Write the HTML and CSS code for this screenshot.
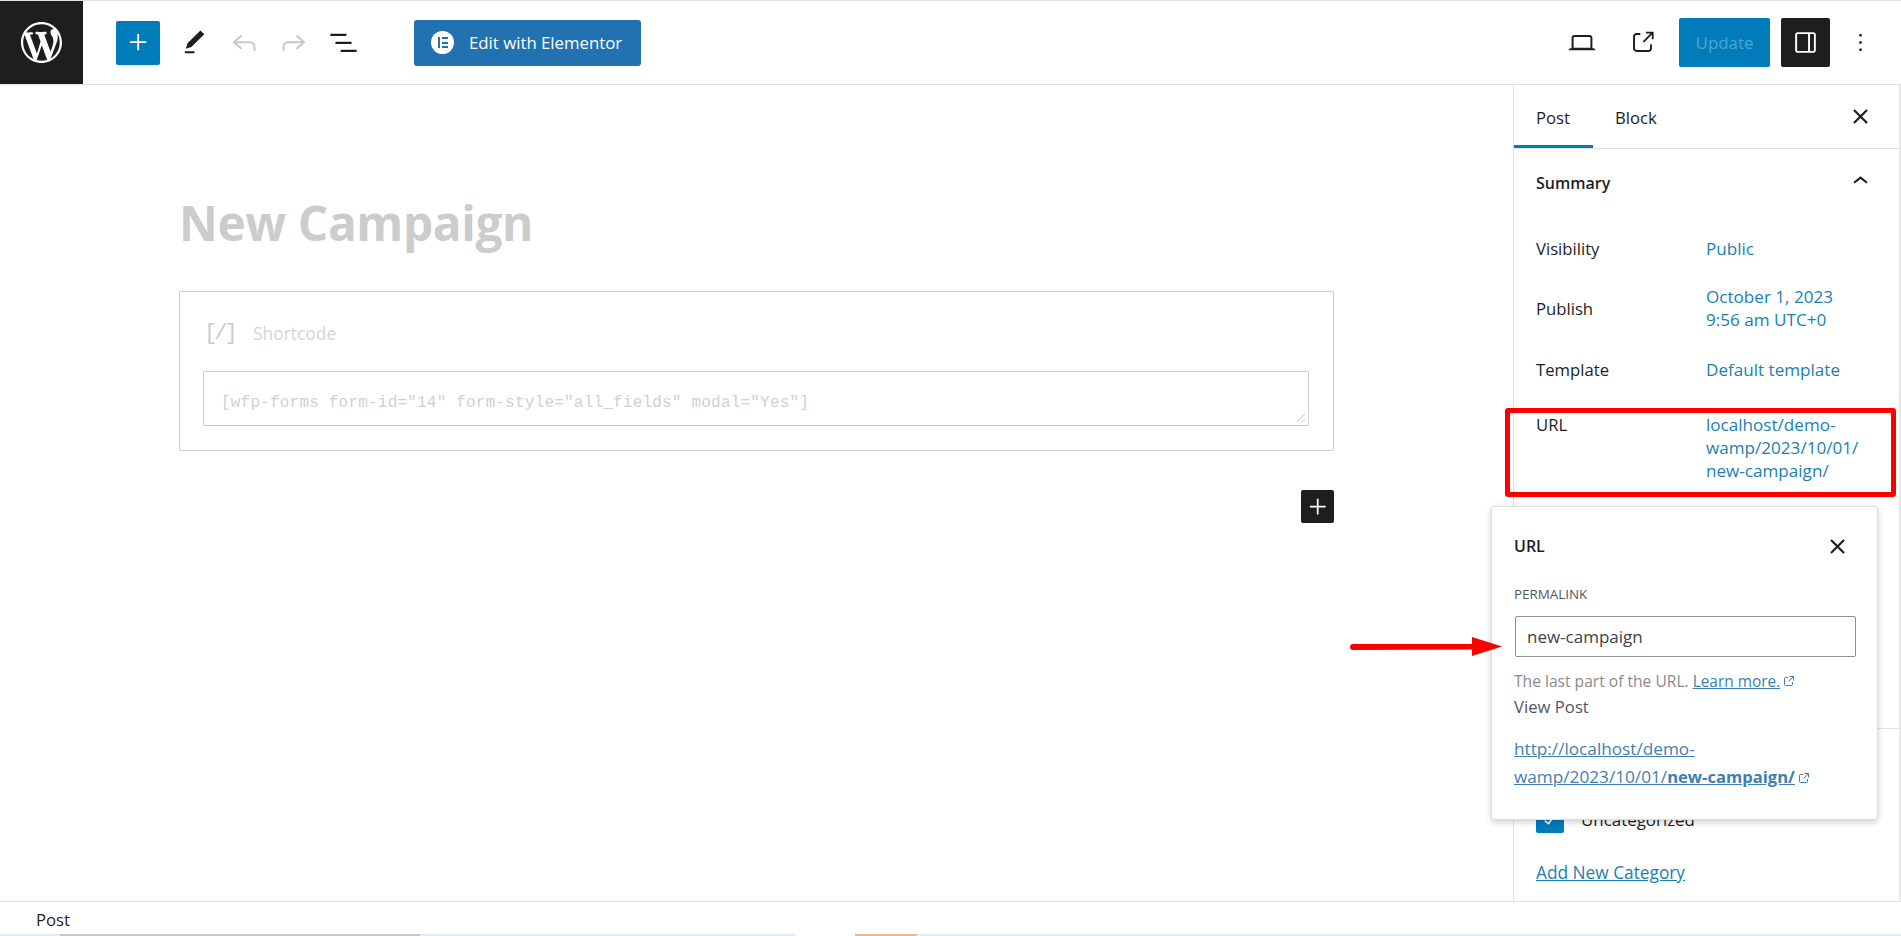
FILE: index.html
```html
<!DOCTYPE html>
<html lang="en">
<head>
<meta charset="utf-8">
<title>New Campaign</title>
<link rel="stylesheet" href="styles.css">
</head>
<body>
<div class="app">
  <header class="topbar">
    <a class="wp-logo" href="#">
      <svg viewBox="0 0 20 20" width="41" height="41"><path fill="#fff" d="M20 10c0-5.510-4.490-10-10-10C4.480 0 0 4.490 0 10c0 5.520 4.480 10 10 10 5.510 0 10-4.480 10-10zM7.780 15.370L4.370 6.220c.55-.02 1.170-.08 1.170-.08.500-.06.440-1.130-.06-1.110 0 0-1.450.11-2.370.11-.18 0-.37 0-.58-.01C4.120 2.690 6.890 1.060 10 1.060c2.300 0 4.410.87 6 2.340-.68-.11-1.650.39-1.650 1.580 0 .74.450 1.360.9 2.100.35.610.55 1.360.55 2.460 0 1.490-1.400 5-1.400 5l-3.030-8.370c.54-.02.82-.17.82-.17.500-.05.440-1.250-.06-1.220 0 0-1.440.12-2.380.12-.87 0-2.330-.12-2.330-.12-.500-.03-.56 1.200-.06 1.220l.92.080 1.260 3.410zM17.410 10c.24-.64.74-1.870.43-4.250.7 1.290 1.050 2.710 1.050 4.250 0 3.290-1.730 6.240-4.400 7.780.97-2.590 1.940-5.200 2.920-7.780zM6.100 18.090C3.120 16.650 1.060 13.570 1.060 10c0-1.310.23-2.500.73-3.620 1.420 3.900 2.840 7.810 4.310 11.710zm4.030-6.800l2.570 6.980c.01.05.04.090.07.120-.87.31-1.800.48-2.770.48-.8 0-1.590-.12-2.340-.34.84-2.420 1.670-4.830 2.470-7.240z"/></svg>
    </a>
    <div class="tools">
      <button class="tool-add" aria-label="Add block"><svg viewBox="0 0 24 24" width="29" height="29"><path fill="#fff" d="M11 12.500H5v-1.500h6V5h1.500v6h6v1.500h-6v6H11z"/></svg></button>
      <button class="tool pencil" aria-label="Tools"><svg viewBox="0 0 24 24" width="29" height="29"><path fill="#1e1e1e" d="M20.100 5.100 16.900 2 6.200 12.700l-1.300 4.400 4.500-1.300L20.100 5.100zM4 20.800h8v-1.500H4v1.500z"/></svg></button>
      <button class="tool undo" aria-label="Undo"><svg viewBox="0 0 24 18" width="24" height="18"><path fill="none" stroke="#c8c8c8" stroke-width="2" d="M9.500 1.500 2 8.200l7.500 6.500M2 8.200h16c2.500 0 4.500 2 4.500 4.500V17"/></svg></button>
      <button class="tool redo" aria-label="Redo"><svg viewBox="0 0 24 18" width="24" height="18"><path fill="none" stroke="#c8c8c8" stroke-width="2" d="M14.500 1.500 22 8.200l-7.500 6.500M22 8.200H6c-2.500 0-4.500 2-4.500 4.500V17"/></svg></button>
      <button class="tool list" aria-label="List view"><svg viewBox="0 0 24 24" width="35" height="35"><path fill="#1e1e1e" d="M3 6h11v1.500H3V6zm3.500 5.500h11V13h-11v-1.500zM10 17h11v1.500H10V17z"/></svg></button>
      <button class="elementor"><span class="el-mark"><i></i><i></i><i></i><i></i></span>Edit with Elementor</button>
    </div>
    <div class="actions">
      <button class="tool laptop" aria-label="Preview"><svg viewBox="0 0 24 24" width="32" height="32"><path fill="#1e1e1e" d="M20.500 16h-.7V8c0-1.100-.9-2-2-2H6.200c-1.100 0-2 .9-2 2v8h-.7c-.8 0-1.500.7-1.500 1.500h20c0-.8-.7-1.500-1.500-1.500zM5.700 8c0-.3.200-.5.500-.5h11.600c.3 0 .5.200.5.500v7.600H5.700V8z"/></svg></button>
      <button class="tool external" aria-label="View post"><svg viewBox="0 0 24 24" width="29" height="29"><path fill="#1e1e1e" d="M18.200 17c0 .7-.6 1.200-1.200 1.200H7c-.7 0-1.200-.6-1.200-1.200V7c0-.7.600-1.200 1.200-1.200h3.200V4.200H7C5.500 4.200 4.200 5.500 4.200 7v10c0 1.500 1.200 2.800 2.800 2.800h10c1.500 0 2.800-1.200 2.800-2.800v-3.600h-1.500V17zM14.900 3v1.500h3.700l-6.400 6.400 1.100 1.100 6.400-6.400v3.700h1.500V3h-6.300z"/></svg></button>
      <button class="update">Update</button>
      <button class="toggle" aria-label="Settings"><svg viewBox="0 0 24 24" width="31" height="31"><path fill="#fff" d="M18 4H6c-1.100 0-2 .9-2 2v12c0 1.100.9 2 2 2h12c1.100 0 2-.9 2-2V6c0-1.100-.9-2-2-2zM5.500 18V6c0-.3.200-.5.500-.5h8v13H6c-.3 0-.5-.2-.5-.5zm13 0c0 .3-.2.500-.5.500h-2.500v-13H18c.3 0 .5.200.5.500v12z"/></svg></button>
      <button class="tool kebab" aria-label="Options"><svg viewBox="0 0 24 24" width="29" height="29"><path fill="#1e1e1e" d="M13 19h-2v-2h2v2zm0-6h-2v-2h2v2zm0-6h-2V5h2v2z"/></svg></button>
    </div>
  </header>

  <main class="workspace">
    <section class="editor">
      <h1 class="post-title">New Campaign</h1>
      <div class="block">
        <div class="block-label"><span class="sc-icon">[/]</span><span>Shortcode</span></div>
        <div class="code-box">[wfp-forms form-id="14" form-style="all_fields" modal="Yes"]
          <svg class="grip" viewBox="0 0 10 10" width="10" height="10"><path stroke="#c8c8c8" fill="none" d="M1 9 9 1M6 9l3-3"/></svg>
        </div>
      </div>
      <div class="inserter-row"><button class="inserter" aria-label="Add block"><svg viewBox="0 0 24 24" width="28" height="28"><path fill="#fff" d="M11 12.500H5v-1.500h6V5h1.500v6h6v1.500h-6v6H11z"/></svg></button></div>
    </section>

    <aside class="sidebar">
      <div class="tabs">
        <span class="tab active">Post</span>
        <span class="tab">Block</span>
        <svg class="tabs-close" viewBox="0 0 24 24" width="29" height="29"><path fill="none" stroke="#1e1e1e" stroke-width="1.800" d="M6.600 6.600 17.400 17.400M17.400 6.600 6.600 17.400"/></svg>
      </div>
      <div class="panel summary">
        <div class="panel-head">
          <span>Summary</span>
          <svg viewBox="0 0 24 24" width="31" height="31"><path fill="#1e1e1e" d="M6.500 12.400 12 8l5.500 4.400-.9 1.200L12 10l-4.500 3.600z"/></svg>
        </div>
        <div class="row r-visibility"><span>Visibility</span><a href="#">Public</a></div>
        <div class="row r-publish"><span>Publish</span><a href="#">October 1, 2023<br>9:56 am UTC+0</a></div>
        <div class="row r-template"><span>Template</span><a href="#">Default template</a></div>
        <div class="row r-url"><span>URL</span><a href="#">localhost/demo-<br>wamp/2023/10/01/<br>new-campaign/</a></div>
      </div>
      <div class="panel categories">
        <label class="check"><span class="box"><svg viewBox="0 0 24 24" width="24" height="24"><path fill="#fff" d="M16.700 7.100l-6.300 8.500-3.300-2.500-.9 1.200 4.500 3.400L17.900 7.900z"/></svg></span>Uncategorized</label>
        <a class="add-cat" href="#">Add New Category</a>
      </div>
    </aside>

    <div class="red-box"></div>

    <div class="popover">
      <div class="pop-head">
        <span>URL</span>
        <svg viewBox="0 0 24 24" width="29" height="29"><path fill="none" stroke="#1e1e1e" stroke-width="1.800" d="M6.600 6.600 17.400 17.400M17.400 6.600 6.600 17.400"/></svg>
      </div>
      <div class="pop-label">PERMALINK</div>
      <div class="pop-input">new-campaign</div>
      <p class="pop-help">The last part of the URL. <a href="#">Learn more.</a><svg class="ext" viewBox="0 0 12 12" width="12" height="12"><path fill="none" stroke="#3f7fb0" d="M5 2.500H2.500a1 1 0 0 0-1 1v6a1 1 0 0 0 1 1h6a1 1 0 0 0 1-1V7M6.500 1.500h4v4M10.500 1.500 5.500 6.500"/></svg></p>
      <div class="pop-view">View Post</div>
      <p class="pop-link"><a href="#">http://localhost/demo-<br>wamp/2023/10/01/<b>new-campaign/</b></a><svg class="ext" viewBox="0 0 12 12" width="12" height="12"><path fill="none" stroke="#3f7fb0" d="M5 2.500H2.500a1 1 0 0 0-1 1v6a1 1 0 0 0 1 1h6a1 1 0 0 0 1-1V7M6.500 1.500h4v4M10.500 1.500 5.500 6.500"/></svg></p>
    </div>

    <svg class="red-arrow" viewBox="0 0 153 20" width="153" height="20"><path fill="#f00" d="M3 7 122 7V0l30 9.500L122 19v-6.500L3 13a3 3 0 0 1 0-6z"/></svg>
  </main>

  <footer class="statusbar">Post</footer>
  <div class="strip"><i class="s1"></i><i class="s2"></i><i class="s3"></i><i class="s4"></i><i class="s5"></i><i class="s6"></i></div>
</div>
</body>
</html>
```

FILE: styles.css
```css
* { box-sizing: border-box; }
html, body { margin: 0; padding: 0; height: 100%; background: #fff; }
body { font-family: "Open Sans", "Noto Sans", sans-serif; font-size: 16.7px; color: #1e1e1e; overflow: hidden; }
button { border: 0; background: none; padding: 0; font: inherit; display: flex; align-items: center; justify-content: center; }
button svg { flex: none; }
a { color: #1b7fb0; text-decoration: none; }
svg { display: block; }
p { margin: 0; }

.app { display: flex; flex-direction: column; height: 936px; }

.topbar { flex: 0 0 85px; display: flex; align-items: center; border-top: 1px solid #e0e0e0; border-bottom: 1px solid #e0e0e0; }
.wp-logo { flex: 0 0 83px; height: 83px; background: #1e1e1e; display: flex; align-items: center; justify-content: center; }
.tools { display: flex; align-items: center; margin-left: 33px; }
.tool-add { width: 44px; height: 44px; background: #007cba; border-radius: 2px; }
.tool { width: 29px; height: 44px; }
.pencil { margin-left: 20px; }
.undo { margin-left: 20px; }
.redo { margin-left: 21px; }
.list { margin-left: 21px; }
.elementor { margin-left: 56px; width: 227px; height: 46px; background: #2271b1; color: #fff; border-radius: 3px; justify-content: flex-start; padding-left: 17px; font-size: 16.8px; }
.el-mark { width: 23px; height: 23px; border-radius: 50%; background: #fff; margin-right: 15px; position: relative; flex: none; }
.el-mark i { position: absolute; background: #2271b1; display: block; }
.el-mark i:nth-child(1) { left: 7px; top: 6px; width: 2px; height: 11px; }
.el-mark i:nth-child(2) { left: 11px; top: 6px; width: 6px; height: 2px; }
.el-mark i:nth-child(3) { left: 11px; top: 10.500px; width: 6px; height: 2px; }
.el-mark i:nth-child(4) { left: 11px; top: 15px; width: 6px; height: 2px; }
.actions { margin-left: auto; display: flex; align-items: center; padding-right: 26px; }
.external { margin-left: 32px; }
.update { margin-left: 22px; width: 91px; height: 49px; background: #007cba; color: #4ba6d6; border-radius: 2px; font-size: 16.9px; }
.toggle { margin-left: 11px; width: 49px; height: 49px; background: #1e1e1e; border-radius: 2px; }
.kebab { margin-left: 16px; }

.workspace { flex: 1; display: flex; position: relative; min-height: 0; }
.editor { flex: 1; padding: 0 179px; min-width: 0; }
.post-title { margin: 100px 0 0; font-size: 47.8px; line-height: 76px; font-weight: 700; color: #ccc; letter-spacing: -.4px; }
.block { margin-top: 30px; height: 160px; border: 1px solid #ccc; border-radius: 2px; padding: 23px 20px 0 24px; width: 1155px; }
.block-label { display: flex; align-items: center; gap: 24px; height: 36px; color: #d4d4d4; font-size: 17.4px; }
.sc-icon { font-family: "Liberation Mono", monospace; font-size: 22px; letter-spacing: -3px; color: #ccc; width: 25px; }
.code-box { position: relative; margin: 20px 0 0 -1px; height: 55px; width: 1106px; border: 1px solid #ccc; border-radius: 2px; padding: 22px 0 0 17px; font-family: "Liberation Mono", monospace; font-size: 16px; letter-spacing: .2px; color: #d0d0d0; }
.grip { position: absolute; right: 2px; bottom: 2px; }
.inserter-row { width: 1155px; display: flex; justify-content: flex-end; margin-top: 39px; }
.inserter { width: 33px; height: 33px; background: #1e1e1e; border-radius: 2px; }

.sidebar { flex: 0 0 388px; border-left: 1px solid #e0e0e0; border-right: 2px solid #e8e8e8; }
.tabs { display: flex; height: 64px; align-items: stretch; border-bottom: 1px solid #e0e0e0; position: relative; }
.tab { display: flex; align-items: center; padding: 1px 22px 0; }
.tab.active { box-shadow: inset 0 -3px 0 #007cba; width: 79px; }
.tabs-close { align-self: center; margin-left: auto; margin-right: 24px; }
.panel { padding: 0 22px; }
.summary { height: 580px; border-bottom: 1px solid #e0e0e0; }
.panel-head { display: flex; justify-content: space-between; align-items: center; height: 70px; font-weight: 600; font-size: 16px; padding: 0 1px 2px 0; }
.panel-head svg { margin-bottom: 4px; }
.row { display: grid; grid-template-columns: 170px 1fr; align-items: center; line-height: 23px; }
.row a { font-size: 17.1px; }
.r-visibility { margin-top: 18px; }
.r-publish { margin-top: 25px; }
.r-template { margin-top: 27px; }
.r-url { margin-top: 32px; align-items: start; }
.check { display: flex; align-items: center; margin-top: 76px; gap: 17px; font-size: 16.9px; }
.box { width: 28px; height: 28px; background: #007cba; border-radius: 2px; display: flex; align-items: center; justify-content: center; }
.add-cat { display: block; margin-top: 28px; text-decoration: underline; font-size: 17.3px; }

.red-box { position: absolute; left: 1505px; top: 323px; width: 391px; height: 89px; border: 5px solid #f00; border-radius: 3px; }
.red-arrow { position: absolute; left: 1350px; top: 552px; }

.popover { position: absolute; left: 1491px; top: 421px; width: 387px; height: 314px; background: #fff; border: 1px solid #ddd; border-radius: 3px; box-shadow: 0 2px 6px rgba(0,0,0,.2); padding: 0 22px; }
.pop-head { display: flex; justify-content: space-between; align-items: center; height: 46px; margin-top: 16px; font-weight: 600; font-size: 16px; padding-right: 3px; }
.pop-label { margin-top: 16px; font-size: 13.4px; line-height: 18px; font-weight: 500; color: #50575e; }
.pop-input { margin: 13px 0 0 1px; width: 341px; height: 41px; border: 1px solid #8c8f94; border-radius: 2px; padding-left: 11px; line-height: 39px; color: #3c434a; font-size: 17px; }
.pop-help { margin-top: 12.500px; color: #8a8a8a; line-height: 23px; font-size: 15.6px; display: flex; align-items: center; white-space: pre; }
.pop-help a { font-size: 15.4px; }
.pop-help a, .pop-link a { color: #3f7fb0; text-decoration: underline; }
.ext { margin-left: 3px; flex: none; }
.pop-view { color: #50575e; line-height: 23px; margin-top: 2px; }
.pop-link { margin-top: 17.500px; line-height: 28px; display: flex; align-items: flex-end; font-size: 17.2px; }
.pop-link b { font-size: 16.6px; }
.pop-link .ext { margin-bottom: 7px; }

.statusbar { flex: 0 0 33px; min-height: 0; overflow: hidden; border-top: 1px solid #e0e0e0; padding: 2px 0 0 36px; line-height: 32px; }
.strip { flex: 0 0 2px; display: flex; }
.strip i { display: block; height: 2px; }
.s1 { width: 60px; background: #dcedf3; }
.s2 { width: 360px; background: #c8c8c8; }
.s3 { width: 375px; background: #dcedf3; }
.s4 { width: 60px; background: #fff; }
.s5 { width: 62px; background: #e8b98c; }
.s6 { flex: 1; background: #dcedf3; }
```
